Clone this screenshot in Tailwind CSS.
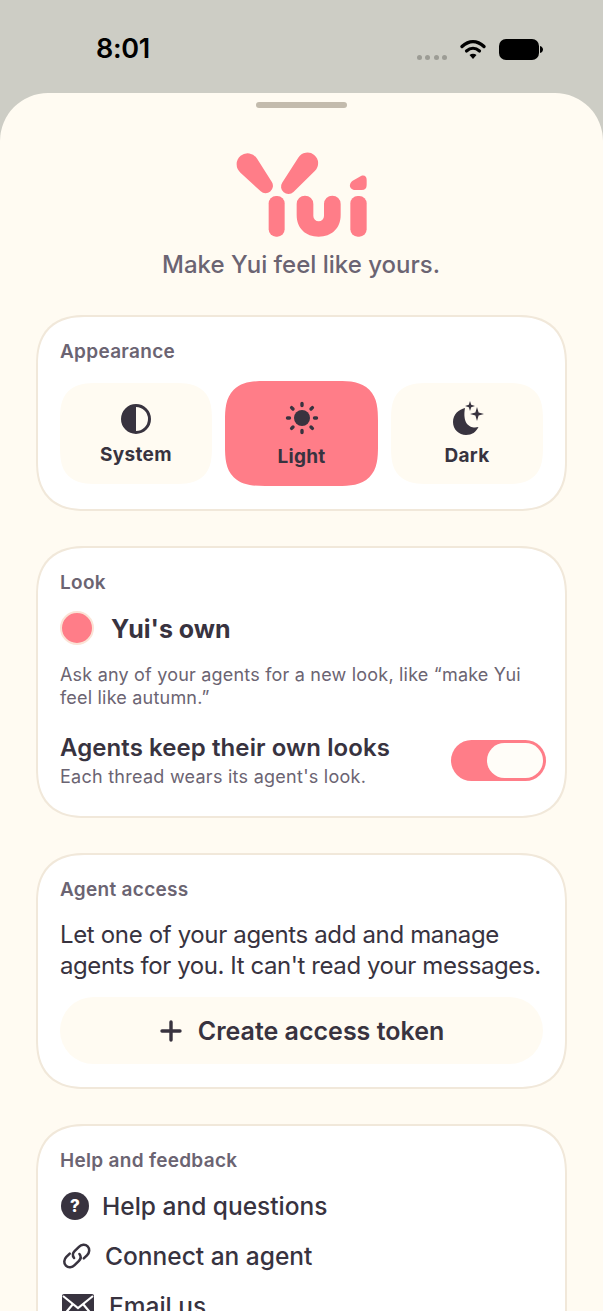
<!DOCTYPE html>
<html lang="en">
<head>
  <meta charset="UTF-8">
  <meta name="viewport" content="width=device-width, initial-scale=1.0">
  <title>Make Yui feel like yours</title>
  <script src="https://cdn.jsdelivr.net/npm/@tailwindcss/browser@4"></script>
</head>
<body class="bg-[#cdcdc5] h-[1311px] overflow-hidden font-['Inter',sans-serif] text-[#38333f]">

  <!-- Status bar -->
  <div class="h-[93px] flex justify-between pl-[60px] pr-[60px] pt-[31px]">
    <div class="w-[126px] text-center text-[27px] leading-[36px] font-semibold tracking-[-0.3px] text-black">8:01</div>
    <div class="flex items-center h-[36px] gap-[12px]">
      <div class="flex gap-[3.5px] mt-[16px]">
        <span class="w-[5px] h-[5px] rounded-full bg-[#9c9c95]"></span>
        <span class="w-[5px] h-[5px] rounded-full bg-[#9c9c95]"></span>
        <span class="w-[5px] h-[5px] rounded-full bg-[#9c9c95]"></span>
        <span class="w-[5px] h-[5px] rounded-full bg-[#9c9c95]"></span>
      </div>
      <svg width="28" height="22" viewBox="0 0 26 22" fill="none">
        <path d="M2 8.500C9 2 17 2 24 8.500" stroke="#000" stroke-width="3.400" stroke-linecap="round"/>
        <path d="M6.500 13C10.500 9.500 15.500 9.500 19.500 13" stroke="#000" stroke-width="3.200" stroke-linecap="round"/>
        <path d="M13 21L9.500 17C11.500 15.300 14.500 15.300 16.500 17Z" fill="#000"/>
      </svg>
      <svg width="44" height="21" viewBox="0 0 44 21">
        <rect x="0" y="0" width="40" height="21" rx="7" fill="#000"/>
        <path d="M41 7C43 7.500 44 9 44 10.500S43 13.500 41 14Z" fill="#000"/>
      </svg>
    </div>
  </div>

  <!-- Sheet -->
  <div class="relative bg-[#fffbf2] rounded-t-[48px] h-[1218px] px-[36px]">
    <div class="absolute top-[9px] left-[256px] w-[91px] h-[6px] rounded-full bg-[#c3bbad]"></div>

    <div class="pt-[47px] flex flex-col items-center">
      <svg width="160" height="110" viewBox="0 0 480 330" fill="#ff7d88" class="ml-[-3px]">
        <path d="M110.900 55.400L155.600 126.300A22 22 0 0 1 122.100 154.100L60.600 97.200A33 33 0 1 1 110.900 55.400Z"/>
        <path d="M284.400 92.800L220.400 155.700A22 22 0 0 1 186.500 128.100L235.200 52.700A32 32 0 1 1 284.400 92.800Z"/>
        <rect x="146" y="168" width="48" height="122" rx="22"/>
        <path d="M230 192A25 25 0 0 1 280 192V228A16 16 0 0 0 312 228V192A25 25 0 0 1 362 192V225C362 265 335 290 296 290C257 290 230 265 230 225Z"/>
        <rect x="391" y="168" width="49" height="122" rx="22"/>
        <path d="M398 122L423 108C434 104 440 110 440 120V135C440 145 435 150 425 150H408C395 150 388 142 390 134C391 129 394 125 398 122Z"/>
      </svg>
      <p class="mt-[-1px] ml-[-1px] text-[24px] leading-[32px] font-medium text-[#6b6472]">Make Yui feel like yours.</p>
    </div>

    <!-- Appearance -->
    <section class="mt-[34px] h-[196px] bg-white border-2 border-[#f1e8da] rounded-[50px] [corner-shape:superellipse(1.3)] px-[22px] pt-[23px]">
      <h2 class="text-[19px] leading-[24px] tracking-[0.3px] font-semibold text-[#6b6472]">Appearance</h2>
      <div class="mt-[17px] flex items-center justify-between">
        <button class="w-[152px] h-[101px] bg-[#fffbf2] rounded-[38px] [corner-shape:superellipse(1.5)] flex flex-col items-center pt-[20px]">
          <svg width="32" height="32" viewBox="0 0 32 32">
            <circle cx="16" cy="16" r="13.500" fill="none" stroke="#38333f" stroke-width="3"/>
            <path d="M16 2.500A13.500 13.500 0 0 0 16 29.500Z" fill="#38333f"/>
          </svg>
          <span class="mt-[7px] text-[19px] leading-[26px] tracking-[0.3px] font-bold">System</span>
        </button>
        <button class="w-[153px] h-[105px] bg-[#ff7d88] rounded-[40px] [corner-shape:superellipse(1.5)] flex flex-col items-center pt-[20px]">
          <svg width="34" height="34" viewBox="0 0 34 34" fill="#38333f" stroke="#38333f" stroke-width="3.400" stroke-linecap="round">
            <circle cx="17" cy="17" r="8" stroke="none"/>
            <path d="M17 2.500V4.500M17 29.500V31.500M2.500 17H4.500M29.500 17H31.500M6.600 6.600L8 8M26 26L27.400 27.400M6.600 27.400L8 26M26 8L27.400 6.600"/>
          </svg>
          <span class="mt-[9px] text-[19px] leading-[26px] tracking-[0.3px] font-bold">Light</span>
        </button>
        <button class="w-[152px] h-[101px] bg-[#fffbf2] rounded-[38px] [corner-shape:superellipse(1.5)] flex flex-col items-center pt-[18px]">
          <svg width="34" height="36" viewBox="0 0 34 36" fill="#38333f" class="ml-[2px]">
            <path d="M14 7C8 8.500 2 13 2 21C2 28.500 8 34 15 34C21 34 25 31 27.500 26C20 28 11 24 14 7Z"/>
            <path d="M19 0L20.200 3.800L24 5L20.200 6.200L19 10L17.800 6.200L14 5L17.800 3.800Z"/>
            <path d="M26 6L27.600 11.400L33 13L27.600 14.600L26 20L24.400 14.600L19 13L24.400 11.400Z"/>
          </svg>
          <span class="mt-[6px] text-[19px] leading-[26px] tracking-[0.3px] font-bold">Dark</span>
        </button>
      </div>
    </section>

    <!-- Look -->
    <section class="mt-[35px] h-[272px] bg-white border-2 border-[#f1e8da] rounded-[50px] [corner-shape:superellipse(1.3)] px-[22px] pt-[23px]">
      <h2 class="text-[19px] leading-[24px] tracking-[0.3px] font-semibold text-[#6b6472]">Look</h2>
      <div class="mt-[16px] flex items-center gap-[17px]">
        <span class="w-[34px] h-[34px] rounded-full bg-[#ff7d88] border-2 border-[#fbe3d6]"></span>
        <span class="text-[25px] leading-[34px] font-bold translate-y-[1px]">Yui's own</span>
      </div>
      <p class="mt-[18px] text-[18px] leading-[23px] tracking-[0.2px] text-[#6b6472]">Ask any of your agents for a new look, like “make Yui feel like autumn.”</p>
      <div class="mt-[23px] flex items-center justify-between">
        <div>
          <p class="text-[24px] leading-[32px] tracking-[0.08px] font-semibold">Agents keep their own looks</p>
          <p class="mt-[1px] text-[18px] leading-[24px] tracking-[0.26px] text-[#6b6472]">Each thread wears its agent's look.</p>
        </div>
        <div class="w-[95px] h-[41px] mr-[-3px] mt-[-1px] rounded-full bg-[#ff7d88] p-[3px] flex justify-end">
          <span class="w-[56px] h-[35px] rounded-full bg-[#fffdf8]"></span>
        </div>
      </div>
    </section>

    <!-- Agent access -->
    <section class="mt-[35px] h-[236px] bg-white border-2 border-[#f1e8da] rounded-[50px] [corner-shape:superellipse(1.3)] px-[22px] pt-[23px]">
      <h2 class="text-[19px] leading-[24px] tracking-[0.3px] font-semibold text-[#6b6472]">Agent access</h2>
      <p class="mt-[17px] mr-[-16px] text-[24px] leading-[31px] tracking-[-0.35px]">Let one of your agents add and manage<br><span class="tracking-[-0.42px]">agents for you. It can't read your messages.</span></p>
      <button class="mt-[16px] w-[483px] h-[67px] rounded-full bg-[#fffbf2] flex items-center justify-center gap-[15px]">
        <svg width="24" height="24" viewBox="0 0 24 24" stroke="#38333f" stroke-width="3.400" stroke-linecap="round">
          <path d="M12 3V21M3 12H21"/>
        </svg>
        <span class="text-[25px] leading-[32px] font-semibold">Create access token</span>
      </button>
    </section>

    <!-- Help and feedback -->
    <section class="mt-[35px] h-[260px] bg-white border-2 border-[#f1e8da] rounded-[50px] [corner-shape:superellipse(1.3)] px-[22px] pt-[23px]">
      <h2 class="text-[19px] leading-[24px] tracking-[0.3px] font-semibold text-[#6b6472]">Help and feedback</h2>
      <div class="mt-[8px] flex items-center gap-[14px] h-[50px]">
        <svg width="28" height="28" viewBox="0 0 28 28" class="ml-[1px] mr-[-1px]">
          <circle cx="14" cy="14" r="14" fill="#38333f"/>
          <text x="14" y="20" text-anchor="middle" font-family="Inter" font-weight="800" font-size="17" fill="#fff">?</text>
        </svg>
        <span class="text-[24.500px] leading-[32px] font-medium">Help and questions</span>
      </div>
      <div class="flex items-center gap-[13px] h-[50px]">
        <svg width="30" height="30" viewBox="0 0 31 30" fill="none" stroke="#38333f" stroke-width="2.600" stroke-linecap="round" stroke-linejoin="round" class="ml-[2px]">
          <path d="M12.500 17C10.500 14.500 11 12 13 10L17.500 5.500C20 3 24 2.500 26.500 5C29 7.500 28.500 11.500 26 14L22.500 17.500"/>
          <path d="M18 13C20 15.500 19.500 18 17.500 20L13 24.500C10.500 27 6.500 27.500 4 25C1.500 22.500 2 18.500 4.500 16L8 12.500"/>
        </svg>
        <span class="text-[24.500px] leading-[32px] font-medium">Connect an agent</span>
      </div>
      <div class="flex items-center gap-[15px] h-[50px]">
        <svg width="32" height="24" viewBox="0 0 32 24" class="ml-[2px]">
          <rect width="32" height="24" rx="2" fill="#38333f"/>
          <path d="M1 2L16 14L31 2M1 22L11 10M31 22L21 10" fill="none" stroke="#fff" stroke-width="2.200"/>
        </svg>
        <span class="text-[24.500px] leading-[32px] font-medium">Email us</span>
      </div>
    </section>
  </div>

</body>
</html>
